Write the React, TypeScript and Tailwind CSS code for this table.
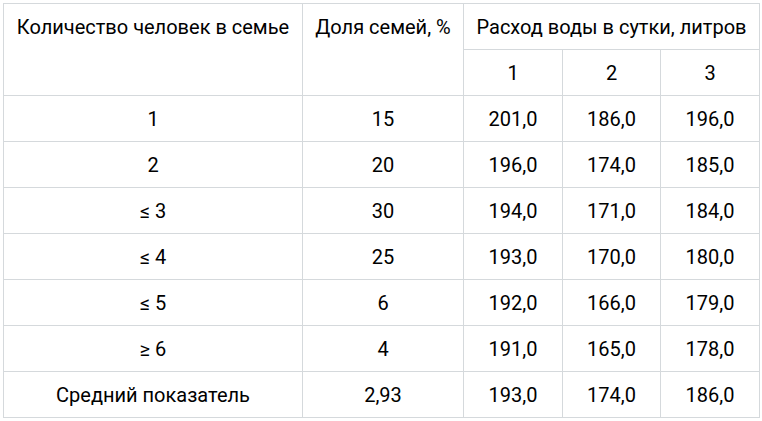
import React from "react";

const rows = [
  ["1", "15", "201,0", "186,0", "196,0"],
  ["2", "20", "196,0", "174,0", "185,0"],
  ["≤ 3", "30", "194,0", "171,0", "184,0"],
  ["≤ 4", "25", "193,0", "170,0", "180,0"],
  ["≤ 5", "6", "192,0", "166,0", "179,0"],
  ["≥ 6", "4", "191,0", "165,0", "178,0"],
  ["Средний показатель", "2,93", "193,0", "174,0", "186,0"],
];

export default function App() {
  const cell = "border border-[#d5d9dc] text-center align-middle h-[46px] p-0";
  return (
    <div className="w-[762px] h-[421px] bg-white pl-[3px] pt-[3px] font-['Roboto',sans-serif] text-[20px] leading-[24px] text-black">
      <table className="border-collapse table-fixed w-[756px]">
        <colgroup>
          <col className="w-[299px]" />
          <col className="w-[161px]" />
          <col className="w-[99px]" />
          <col className="w-[98px]" />
          <col className="w-[99px]" />
        </colgroup>
        <thead>
          <tr>
            <th rowSpan={2} className="border border-[#d5d9dc] font-normal text-center align-top pt-[11px] px-0">
              Количество человек в семье
            </th>
            <th rowSpan={2} className="border border-[#d5d9dc] font-normal text-center align-top pt-[11px] px-0">
              Доля семей, %
            </th>
            <th colSpan={3} className={cell + " font-normal"}>
              Расход воды в сутки, литров
            </th>
          </tr>
          <tr>
            <th className={cell + " font-normal"}>1</th>
            <th className={cell + " font-normal"}>2</th>
            <th className={cell + " font-normal"}>3</th>
          </tr>
        </thead>
        <tbody>
          {rows.map((r, i) => (
            <tr key={i}>
              {r.map((c, j) => (
                <td key={j} className={cell}>
                  {c}
                </td>
              ))}
            </tr>
          ))}
        </tbody>
      </table>
    </div>
  );
}
